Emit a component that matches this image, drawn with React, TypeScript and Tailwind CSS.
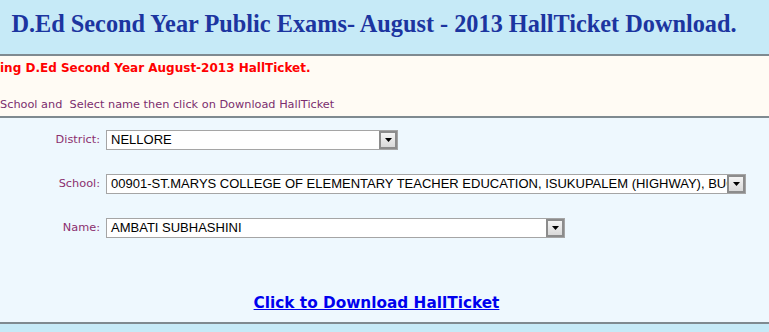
import React from 'react';

const verdana = { fontFamily: '"DejaVu Sans", Verdana, sans-serif' };

const FakeSelect = ({ value, width }: { value: string; width: string }) => (
  <div className={`flex h-[20px] items-stretch border border-[#a5a5a5] bg-white ${width}`}>
    <div className="flex-1 overflow-hidden whitespace-nowrap pl-[4px] text-[13px] leading-[18px] text-black" style={{ fontFamily: '"Liberation Sans", Arial, sans-serif' }}>
      {value}
    </div>
    <div className="flex w-[18px] items-center justify-center border-2 border-[#8c8c8c] bg-gradient-to-b from-[#f4f4f4] to-[#d9d9d9]">
      <svg width="7" height="4" viewBox="0 0 7 4">
        <polygon points="0,0 7,0 3.5,4" fill="#000" />
      </svg>
    </div>
  </div>
);

const rows = [
  { label: 'District:', value: 'NELLORE', width: 'w-[292px]' },
  { label: 'School:', value: '00901-ST.MARYS COLLEGE OF ELEMENTARY TEACHER EDUCATION, ISUKUPALEM (HIGHWAY), BUCHIREDDYPALEM', width: 'w-[640px]' },
  { label: 'Name:', value: 'AMBATI SUBHASHINI', width: 'w-[459px]' },
];

export default function App() {
  return (
    <div className="h-[332px] w-[769px] overflow-hidden bg-[#c6eaf7]">
      {/* title bar */}
      <div className="h-[56px] border-b-2 border-[#7f8a90] bg-[#c6eaf7]">
        <div className="flex h-[48px] w-[748px] items-center justify-center">
          <h1 className="text-[24.3px] font-bold text-[#1c35a0]" style={{ fontFamily: '"Liberation Serif", "Times New Roman", serif' }}>
            D.Ed Second Year Public Exams- August - 2013 HallTicket Download.
          </h1>
        </div>
      </div>

      {/* instructions */}
      <div className="h-[62px] border-b-2 border-[#7f8a90] bg-[#fffbf4]" style={verdana}>
        <p className="pt-[4px] text-[12px] font-bold leading-[16px] text-[#ff0000]">
          ing D.Ed Second Year August-2013 HallTicket.
        </p>
        <p className="pt-[22px] text-[11.3px] leading-[14px] text-[#7b2d6e]">
          School and&nbsp; Select name then click on Download HallTicket
        </p>
      </div>

      {/* form */}
      <div className="h-[206px] border-b-2 border-[#7f8a90] bg-[#eef8fe] pt-[12px]">
        <div className="flex flex-col gap-[24px]">
          {rows.map((r) => (
            <div key={r.label} className="flex items-center">
              <div className="w-[106px] pr-[6px] text-right text-[11.3px] text-[#8b2f6e]" style={verdana}>
                {r.label}
              </div>
              <FakeSelect value={r.value} width={r.width} />
            </div>
          ))}
        </div>
        <div className="w-[753px] pt-[52px] text-center">
          <a href="#" className="text-[15.3px] font-bold text-[#0000ee] underline" style={verdana}>
            Click to Download HallTicket
          </a>
        </div>
      </div>
    </div>
  );
}
